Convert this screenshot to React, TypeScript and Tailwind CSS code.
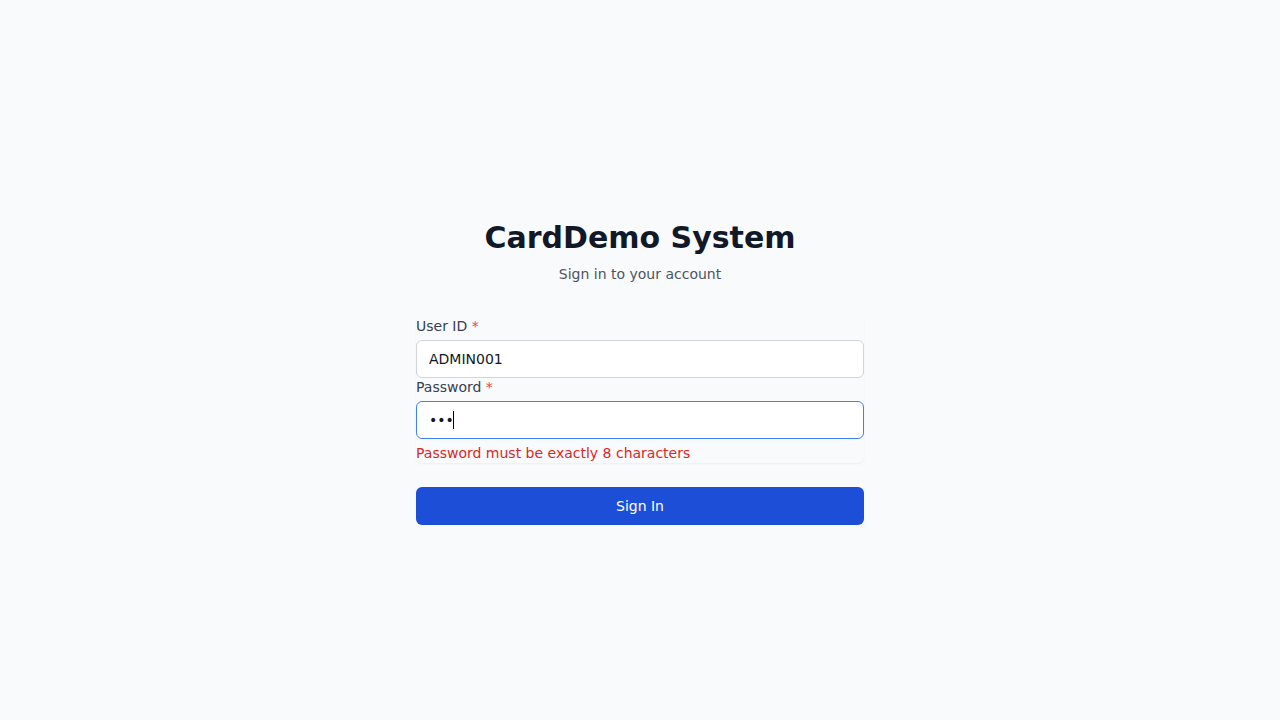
import { useState } from "react";

const App = () => {
  const [userId, setUserId] = useState("ADMIN001");
  const [password, setPassword] = useState("abc");

  return (
    <div className="min-h-screen flex items-center justify-center bg-[#f9fafb] px-4 pt-[24px] font-['DejaVu_Sans',sans-serif]">
      <div className="w-full max-w-md">
        <div>
          <h2 className="text-center text-3xl font-bold text-[#111827]">CardDemo System</h2>
          <p className="mt-2 text-center text-sm text-[#4b5563]">Sign in to your account</p>
        </div>
        <form className="mt-8" onSubmit={(e) => e.preventDefault()}>
          <div className="rounded-md shadow-[0_1px_2px_0_rgba(0,0,0,0.05)] -space-y-px">
            <div>
              <label htmlFor="userId" className="block text-sm text-[#374151] mb-1">
                User ID <span className="text-[#ef4444]">*</span>
              </label>
              <input
                id="userId"
                type="text"
                value={userId}
                onChange={(e) => setUserId(e.target.value)}
                className="block w-full rounded-md border border-[#d1d5db] bg-white px-3 py-2 text-sm text-[#111827] focus:outline-none"
              />
            </div>
            <div>
              <label htmlFor="password" className="block text-sm text-[#374151] mb-1">
                Password <span className="text-[#ef4444]">*</span>
              </label>
              <div className="relative">
                <input
                  id="password"
                  type="password"
                  value={password}
                  onChange={(e) => setPassword(e.target.value)}
                  className="block w-full rounded-md border border-[#3b82f6] bg-white px-3 py-2 text-sm text-[#111827] focus:outline-none"
                />
                {/* caret */}
                <span className="pointer-events-none absolute left-[37px] top-[10px] h-[18px] w-px bg-black" />
              </div>
              <p className="mt-1 text-sm text-[#dc2626]">Password must be exactly 8 characters</p>
            </div>
          </div>
          <button
            type="submit"
            className="mt-6 w-full rounded-md border border-transparent bg-[#1d4ed8] px-4 py-2 text-sm text-white"
          >
            Sign In
          </button>
        </form>
      </div>
    </div>
  );
};

export default App;
